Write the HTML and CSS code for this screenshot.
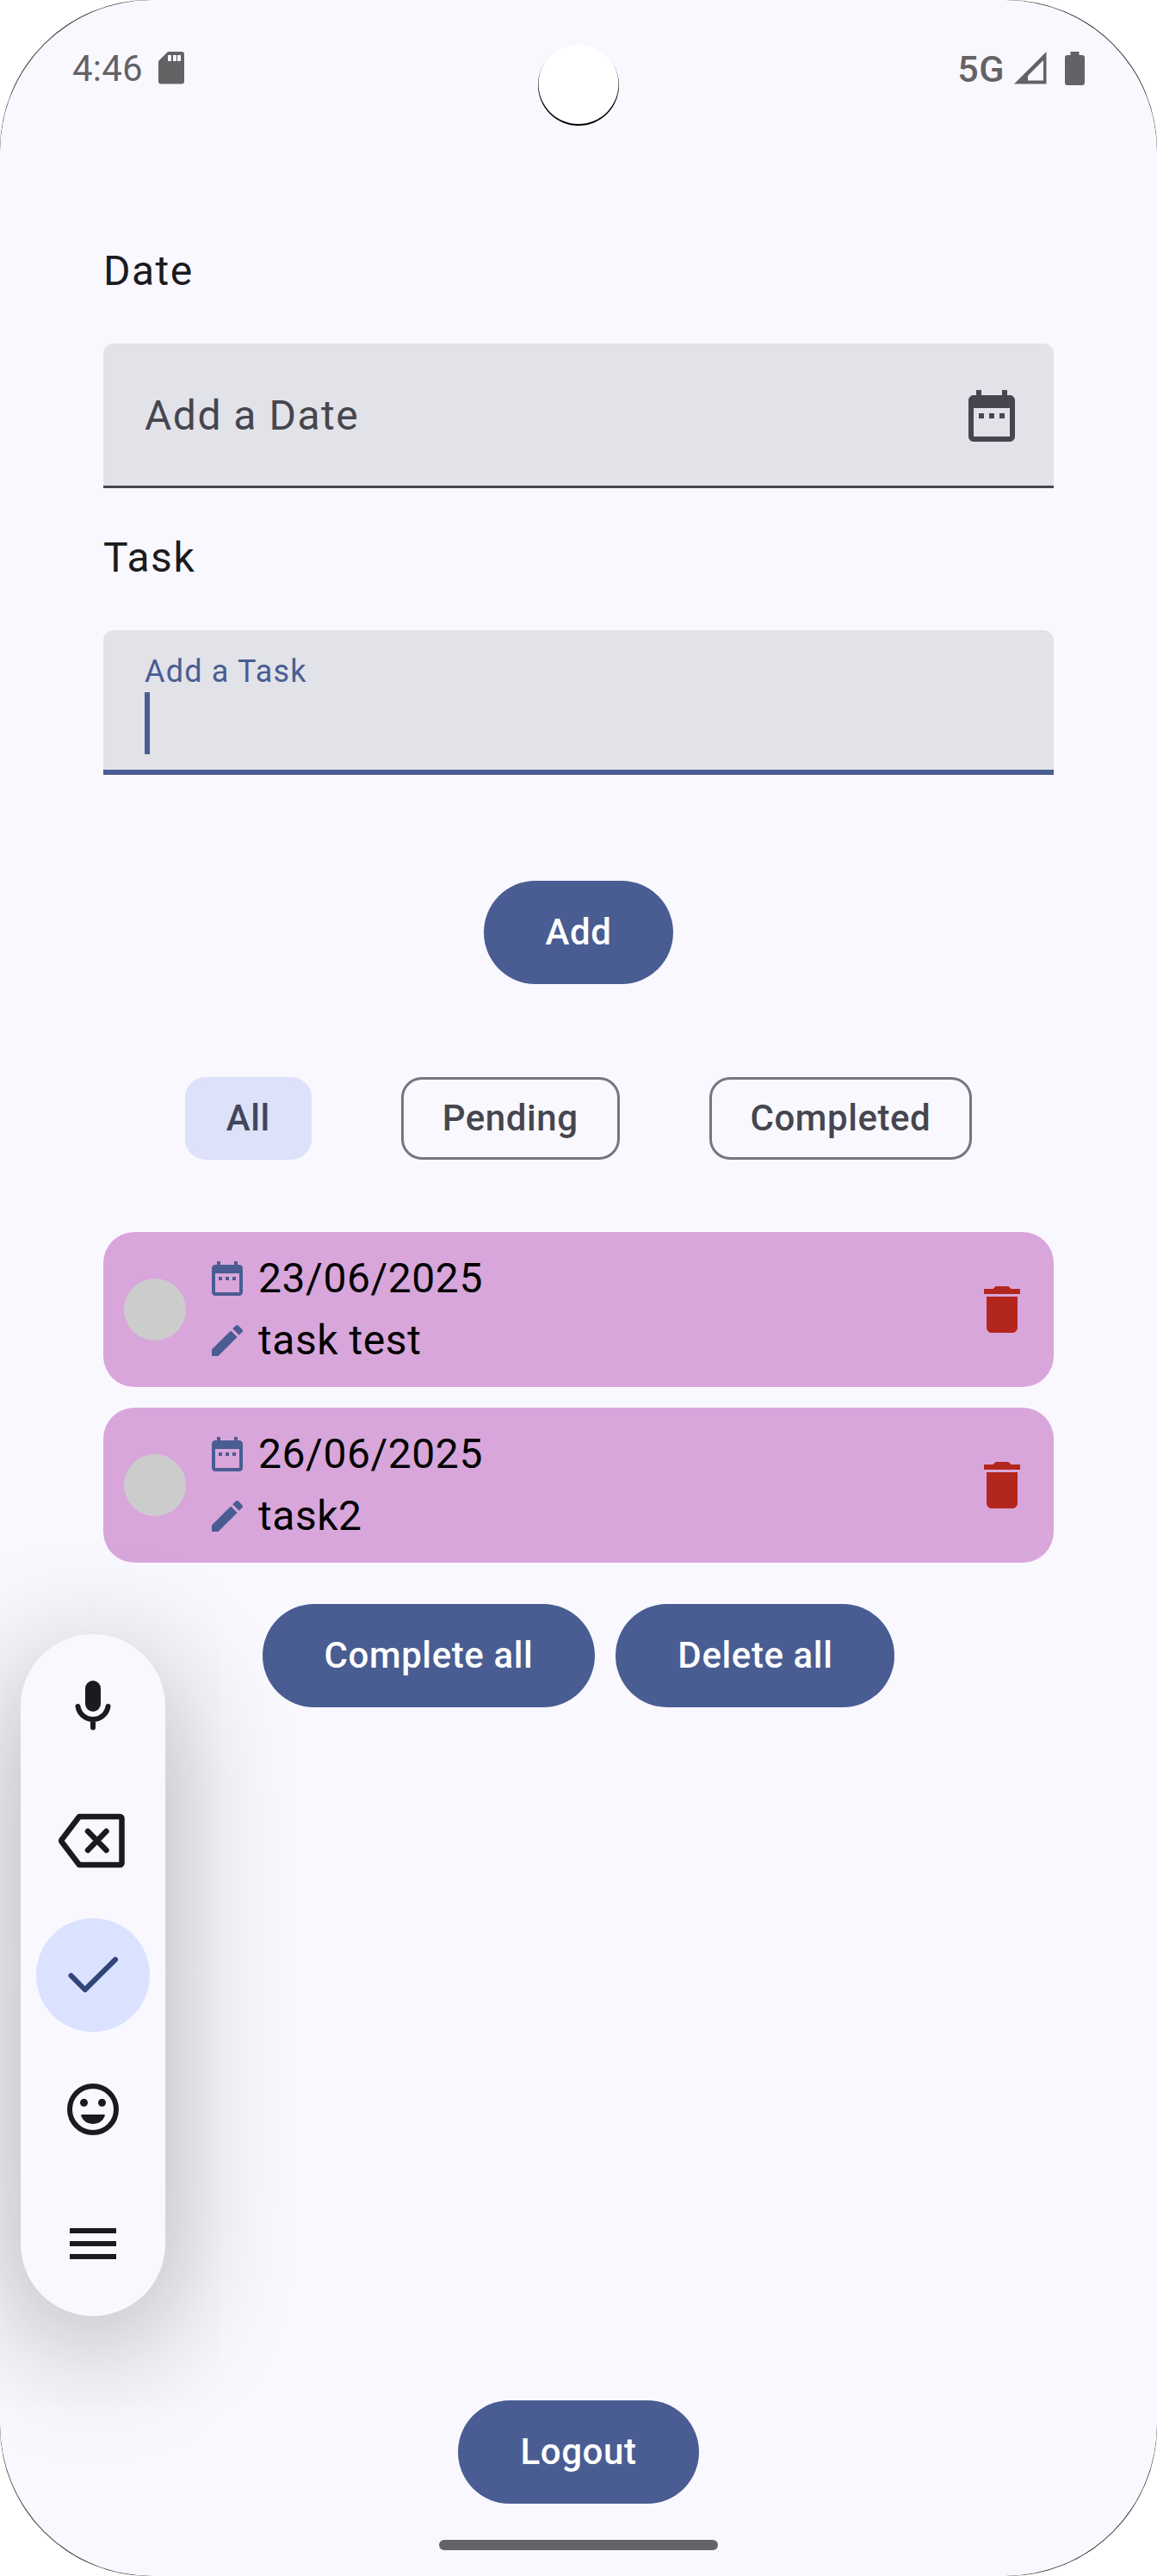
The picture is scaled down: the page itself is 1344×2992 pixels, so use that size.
FILE: index.html
```html
<!DOCTYPE html>
<html lang="en">
<head>
<meta charset="utf-8">
<title>Tasks</title>
<link rel="stylesheet" href="styles.css">
</head>
<body>
<svg class="defs" aria-hidden="true">
  <symbol id="calendar" viewBox="0 0 24 24"><path fill-rule="evenodd" d="M19 4h-1V2h-2v2H8V2H6v2H5c-1.1 0-2 .9-2 2v14c0 1.1.9 2 2 2h14c1.1 0 2-.9 2-2V6c0-1.1-.9-2-2-2zm0 16H5V9h14v11z"/><path d="M7 11h2v2H7zM11 11h2v2h-2zM15 11h2v2h-2z"/></symbol>
  <symbol id="pencil" viewBox="0 0 24 24"><path d="M3 17.25V21h3.75L17.81 9.94l-3.75-3.75L3 17.25zM20.71 7.04c.39-.39.39-1.02 0-1.41l-2.34-2.34c-.39-.39-1.02-.39-1.41 0l-1.83 1.83 3.75 3.75 1.83-1.83z"/></symbol>
  <symbol id="trash" viewBox="0 0 24 24"><path d="M6 19c0 1.1.9 2 2 2h8c1.1 0 2-.9 2-2V7H6v12zM19 4h-3.5l-1-1h-5l-1 1H5v2h14V4z"/></symbol>
</svg>
<div class="device">
  <div class="screen">
    <header class="status">
      <div class="status-left">
        <span class="clock">4:46</span>
        <svg class="sd" width="30" height="38" viewBox="0 0 30 38"><path d="M11 0H27a3 3 0 0 1 3 3V34.5a3 3 0 0 1-3 3H3a3 3 0 0 1-3-3V11z"/><path class="slot" d="M11 4h4v7h-4zM17 4h4v7h-4zM22 4h4v7h-4z"/></svg>
      </div>
      <div class="status-right">
        <span class="network">5G</span>
        <svg width="38" height="38" viewBox="0 0 38 38"><path fill-rule="evenodd" d="M37.5 0V37.5H0zM34 10L16 28V33.5H34z"/></svg>
        <svg class="battery" width="23" height="39" viewBox="0 0 23 39"><path d="M6.500 0h10v4H20a3 3 0 0 1 3 3V36a3 3 0 0 1-3 3H3a3 3 0 0 1-3-3V7a3 3 0 0 1 3-3H6.500z"/></svg>
      </div>
    </header>
    <main class="content">
      <div class="label">Date</div>
      <div class="field">
        <span class="placeholder">Add a Date</span>
        <svg class="icon-lg"><use href="#calendar"/></svg>
      </div>
      <div class="label second">Task</div>
      <div class="field focused">
        <span class="floating">Add a Task</span>
        <span class="caret"></span>
      </div>
      <button class="btn add">Add</button>
      <div class="chips">
        <span class="chip selected">All</span>
        <span class="chip">Pending</span>
        <span class="chip">Completed</span>
      </div>
      <ul class="tasks">
        <li class="task">
          <span class="check"></span>
          <div class="info">
            <div class="line"><svg class="icon-sm"><use href="#calendar"/></svg>23/06/2025</div>
            <div class="line"><svg class="icon-sm"><use href="#pencil"/></svg>task test</div>
          </div>
          <svg class="icon-lg delete"><use href="#trash"/></svg>
        </li>
        <li class="task">
          <span class="check"></span>
          <div class="info">
            <div class="line"><svg class="icon-sm"><use href="#calendar"/></svg>26/06/2025</div>
            <div class="line"><svg class="icon-sm"><use href="#pencil"/></svg>task2</div>
          </div>
          <svg class="icon-lg delete"><use href="#trash"/></svg>
        </li>
      </ul>
      <div class="bulk">
        <button class="btn">Complete all</button>
        <button class="btn">Delete all</button>
      </div>
      <button class="btn logout">Logout</button>
    </main>
    <div class="home-bar"></div>

    <div class="camera"></div>
    <div class="keybar">
      <svg class="key" viewBox="0 0 132 132"><rect x="57" y="36" width="18" height="36" rx="9"/><path class="stroke" d="M48.500 66a17.700 17.700 0 0 0 35 0M66 81v9.500"/></svg>
      <svg class="key" viewBox="0 0 132 132"><path class="stroke thick" d="M50 38H97.500a2 2 0 0 1 2 2V92a2 2 0 0 1-2 2H50L29.300 66.800a1.500 1.500 0 0 1 0-1.600zM60 55L81.500 77M81.500 55L60 77"/></svg>
      <svg class="key active" viewBox="0 0 132 132"><path class="stroke" d="M40.500 66.700L56.700 83L92 48"/></svg>
      <svg class="key" viewBox="0 0 132 132"><circle class="stroke" cx="66" cy="66" r="27"/><circle cx="55.500" cy="58.300" r="4.500"/><circle cx="76.500" cy="58.300" r="4.500"/><path d="M53.500 72h25q2 0 1.300 1.800a15 15 0 0 1-27.600 0q-.7-1.800 1.300-1.800z"/></svg>
      <svg class="key" viewBox="0 0 132 132"><path d="M39 48h54v6H39zM39 63h54v6H39zM39 78h54v6H39z"/></svg>
    </div>
  </div>
</div>
</body>
</html>
```
FILE: styles.css
```css
* { box-sizing: border-box; }
body { margin: 0; background: #fff; font-family: Roboto, "Liberation Sans", sans-serif; }
svg { display: block; flex: none; fill: currentColor; }
.defs { display: none; }

.device { width: 1344px; height: 2992px; border-radius: 174px; background: #111; }
.screen {
  position: relative; width: 100%; height: 100%; overflow: hidden;
  display: flex; flex-direction: column;
  border-radius: 176px; background: #faf8ff; color: #1a1b20;
}

.status {
  display: flex; justify-content: space-between; align-items: flex-start;
  height: 279px; padding: 60px 84px 0; color: #636366;
}
.status-left, .status-right { display: flex; align-items: center; height: 38px; }
.clock { font-size: 42px; line-height: 40px; padding-top: 2px; letter-spacing: .2px; }
.sd { margin-left: 18px; }
.slot { fill: #faf8ff; }
.network { font-size: 43px; line-height: 40px; padding-top: 2px; font-weight: 500; letter-spacing: .5px; margin-right: 11px; }
.battery { margin-left: 21px; }

.content { flex: 1; display: flex; flex-direction: column; padding: 0 120px 42px; }
.label { font-size: 48px; line-height: 72px; letter-spacing: 1.5px; margin-bottom: 48px; }
.second { margin-top: 45px; }
.field {
  display: flex; align-items: center; justify-content: space-between;
  height: 168px; flex: none; padding: 3px 36px 0 48px;
  background: #e2e2e9; border-bottom: 3px solid #45464f;
  border-radius: 12px 12px 0 0; color: #45464f;
}
.placeholder { font-size: 48px; line-height: 72px; letter-spacing: 1.5px; }
.focused {
  flex-direction: column; align-items: flex-start; justify-content: flex-start;
  padding-top: 24px; border-bottom: 6px solid #495d92; color: #495d92;
}
.floating { font-size: 36px; line-height: 48px; letter-spacing: 1.2px; }
.caret { width: 6px; height: 72px; background: #495d92; }
.icon-lg { width: 72px; height: 72px; }
.icon-sm { width: 48px; height: 48px; color: #495d92; margin-right: 12px; }

.btn {
  height: 120px; flex: none; padding: 0 72px; border: 0; border-radius: 60px;
  background: #495d92; color: #fff;
  font: 500 42px/60px Roboto, "Liberation Sans", sans-serif; letter-spacing: .6px;
}
.add { align-self: center; margin-top: 123px; }
.chips { display: flex; justify-content: center; gap: 104px; margin-top: 108px; }
.chip {
  height: 96px; padding: 0 45px; border: 3px solid #757780; border-radius: 24px;
  color: #45464f; font-size: 42px; line-height: 90px; font-weight: 500; letter-spacing: .55px;
}
.selected { background: #dde1f9; border-color: #dde1f9; color: #414659; }

.tasks { list-style: none; margin: 84px 0 0; padding: 0; display: flex; flex-direction: column; gap: 24px; }
.task {
  display: flex; align-items: center; height: 180px; padding: 0 24px;
  border-radius: 36px; background: #d8a6da; color: #000;
}
.check { width: 72px; height: 72px; border-radius: 50%; background: #ccc; }
.info { flex: 1; margin-left: 24px; }
.line { display: flex; align-items: center; font-size: 48px; line-height: 72px; letter-spacing: .55px; }
.delete { color: #b3261e; }
.bulk { display: flex; justify-content: center; gap: 24px; margin-top: 48px; }
.logout { align-self: center; margin-top: auto; }
.home-bar { align-self: center; flex: none; width: 324px; height: 12px; border-radius: 6px; background: #646466; margin-bottom: 30px; }

.camera {
  position: absolute; left: 625px; top: 52px; width: 94px; height: 94px;
  border-radius: 50%; background: #fff; box-shadow: inset 0 -1.5px 0 .5px #000;
}
.keybar {
  position: absolute; left: 24px; top: 1898px; width: 168px; height: 792px;
  display: flex; flex-direction: column; align-items: center; gap: 24px; padding: 18px;
  border-radius: 84px; background: #faf8ff;
  box-shadow: 0 32px 145px rgba(20, 8, 18, .33);
}
.key { width: 132px; height: 132px; border-radius: 50%; }
.active { background: #dae2ff; color: #314578; }
.stroke { fill: none; stroke: currentColor; stroke-width: 6; stroke-linecap: round; stroke-linejoin: round; }
.thick { stroke-width: 6.5; }
```
